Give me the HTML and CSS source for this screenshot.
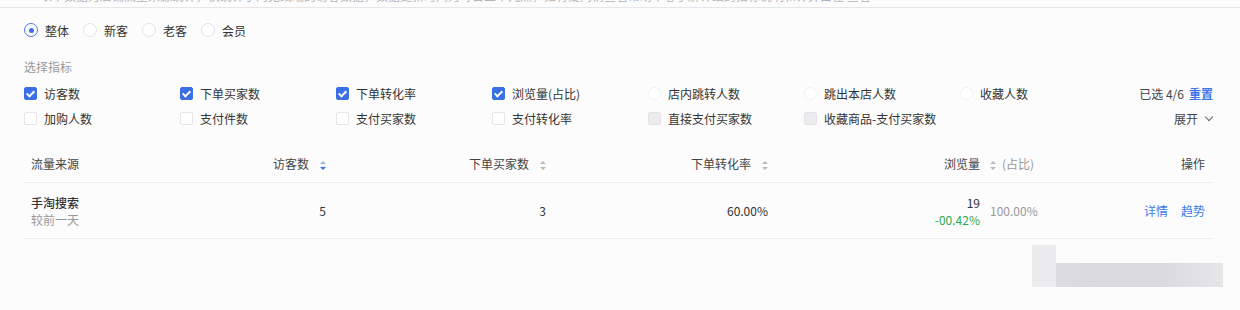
FILE: index.html
```html
<!DOCTYPE html>
<html lang="zh-CN">

<head>
    <meta charset="UTF-8">
    <title>流量来源</title>
    <link rel="stylesheet" href="styles.css">
</head>

<body>
    <div class="top-note">
        <p>以下数据为店铺流量来源统计，仅统计手淘无线端的访客数据，数据更新时间为每日上午九点，如有疑问请查看帮助中心了解详细的指标说明和计算口径 查看</p>
    </div>

    <div class="panel">
        <div class="radio-row">
            <label class="radio checked"><span class="dot"></span>整体</label>
            <label class="radio"><span class="dot"></span>新客</label>
            <label class="radio"><span class="dot"></span>老客</label>
            <label class="radio"><span class="dot"></span>会员</label>
        </div>

        <div class="picker-title">选择指标</div>
        <div class="picker">
            <label class="check on"><span class="box"></span>访客数</label>
            <label class="check on"><span class="box"></span>下单买家数</label>
            <label class="check on"><span class="box"></span>下单转化率</label>
            <label class="check on"><span class="box"></span>浏览量(占比)</label>
            <label class="check faint"><span class="box"></span>店内跳转人数</label>
            <label class="check faint"><span class="box"></span>跳出本店人数</label>
            <label class="check faint"><span class="box"></span>收藏人数</label>
            <div class="picker-side">已选 4/6 <a class="reset">重置</a></div>

            <label class="check"><span class="box"></span>加购人数</label>
            <label class="check"><span class="box"></span>支付件数</label>
            <label class="check"><span class="box"></span>支付买家数</label>
            <label class="check"><span class="box"></span>支付转化率</label>
            <label class="check off"><span class="box"></span>直接支付买家数</label>
            <label class="check off"><span class="box"></span>收藏商品-支付买家数</label>
            <span></span>
            <div class="picker-side">展开 <span class="chev"></span></div>
        </div>

        <table class="data">
            <colgroup>
                <col style="width: 106px">
                <col style="width: 198px">
                <col style="width: 220px">
                <col style="width: 222px">
                <col style="width: 212px">
                <col style="width: 118px">
                <col>
            </colgroup>
            <thead>
                <tr>
                    <th class="left">流量来源</th>
                    <th>访客数<span class="sort active"></span></th>
                    <th>下单买家数<span class="sort"></span></th>
                    <th>下单转化率<span class="sort"></span></th>
                    <th>浏览量</th>
                    <th class="share"><span class="sort"></span><span class="muted">(占比)</span></th>
                    <th class="ops">操作</th>
                </tr>
            </thead>
            <tbody>
                <tr>
                    <td class="left">
                        <div class="src">手淘搜索</div>
                        <div class="muted">较前一天</div>
                    </td>
                    <td class="num">5</td>
                    <td class="num">3</td>
                    <td class="num">60.00%</td>
                    <td class="num">
                        <div>19</div>
                        <div class="down">-00.42%</div>
                    </td>
                    <td class="share muted">100.00%</td>
                    <td class="ops"><a>详情</a><a>趋势</a></td>
                </tr>
            </tbody>
        </table>
    </div>

    <div class="mark"><span class="mark-tab"></span></div>
</body>

</html>
```

FILE: styles.css
```css
body {
    margin: 0;
    background-color: #fcfcfd;
    font-family: "Noto Sans CJK SC", "Noto Sans", sans-serif;
    font-size: 12px;
    color: #333;
}

.top-note {
    height: 7px;
    overflow: hidden;
    border-bottom: 1px solid #e7e7ea;
    padding-left: 40px;
}

.top-note p {
    margin: -12px 0 0;
    color: #b5b5b8;
    font-size: 12px;
    line-height: 16px;
    white-space: nowrap;
}

.panel {
    padding: 0 27px 0 24px;
}

/* radio tabs */
.radio-row {
    display: flex;
    gap: 14px;
    height: 28px;
    margin-top: 8px;
    align-items: center;
}

.radio {
    display: flex;
    align-items: center;
    gap: 7px;
    color: #333;
}

.radio .dot {
    width: 12px;
    height: 12px;
    border: 1px solid #e3e3e6;
    border-radius: 50%;
    background: #fff;
    display: flex;
    align-items: center;
    justify-content: center;
}

.radio.checked .dot {
    border-color: #4a7ae8;
}

.radio.checked .dot::after {
    content: "";
    width: 5px;
    height: 5px;
    border-radius: 50%;
    background: #3d6fe4;
}

/* metric picker */
.picker-title {
    color: #999;
    margin-top: 15px;
    line-height: 16px;
}

.picker {
    display: grid;
    grid-template-columns: repeat(7, 156px) 1fr;
    grid-auto-rows: 25px;
    align-items: center;
    margin-top: 6px;
}

.check {
    display: flex;
    align-items: center;
    gap: 7px;
    color: #333;
    white-space: nowrap;
}

.check .box {
    position: relative;
    width: 11px;
    height: 11px;
    border: 1px solid #e6e6e9;
    border-radius: 2px;
    background: #fff;
    flex: none;
}

.check.faint .box {
    border-color: #f0f0f2;
    border-radius: 50%;
}

.check.off .box {
    background: #ececef;
    border-color: #e2e2e6;
}

.check.on .box {
    background: #3a6fe6;
    border-color: #3a6fe6;
}

.check.on .box::after {
    content: "";
    position: absolute;
    left: 3px;
    top: 1px;
    width: 3px;
    height: 6px;
    border: solid #fff;
    border-width: 0 2px 2px 0;
    transform: rotate(45deg);
}

.picker-side {
    justify-self: end;
    display: flex;
    align-items: center;
    gap: 5px;
    color: #444;
}

.reset {
    color: #3b74ea;
    font-weight: bold;
}

.chev {
    width: 5px;
    height: 5px;
    border: solid #666;
    border-width: 0 1px 1px 0;
    transform: rotate(45deg);
    margin: -3px 1px 0 3px;
}

/* table */
.data {
    width: 100%;
    margin-top: 14px;
    border-collapse: collapse;
    table-layout: fixed;
}

.data th {
    font-weight: normal;
    color: #444;
    text-align: right;
    height: 37px;
    padding: 0 2px 0 0;
    border-bottom: 1px solid #ececef;
    white-space: nowrap;
}

.data td {
    height: 55px;
    padding: 0 2px 0 0;
    text-align: right;
    border-bottom: 1px solid #ececef;
    line-height: 17px;
}

.data .left {
    text-align: left;
    padding-left: 7px;
}

.data .share {
    text-align: left;
    padding-left: 8px;
}

.data .ops {
    padding-right: 8px;
}

.src {
    color: #333;
    font-weight: 500;
}

.muted {
    color: #999;
}

.down {
    color: #2fa84a;
}

.ops a {
    color: #3b7ae8;
    margin-left: 13px;
}

.sort {
    display: inline-block;
    position: relative;
    width: 6px;
    height: 9px;
    margin-left: 11px;
    vertical-align: -1px;
}

.share .sort {
    margin: 0 6px 0 0;
}

.sort::before,
.sort::after {
    content: "";
    position: absolute;
    left: 0;
    border-left: 3px solid transparent;
    border-right: 3px solid transparent;
}

.sort::before {
    top: 0;
    border-bottom: 3px solid #bbb;
}

.sort::after {
    bottom: 0;
    border-top: 3px solid #bbb;
}

.sort.active::before {
    border-bottom-color: #9fb3de;
}

.sort.active::after {
    border-top-color: #3a6fe6;
}

/* blurred watermark over the corner */
.mark {
    position: absolute;
    left: 1032px;
    top: 245px;
    width: 191px;
    height: 42px;
}

.mark-tab {
    position: absolute;
    left: 0;
    top: 0;
    width: 24px;
    height: 42px;
    background: #ececef;
}

.mark::after {
    content: "";
    position: absolute;
    left: 24px;
    right: 0;
    bottom: 0;
    height: 24px;
    background: linear-gradient(90deg, #dcdce0 0%, #dadade 60%, #e6e6e9 100%);
}
```
